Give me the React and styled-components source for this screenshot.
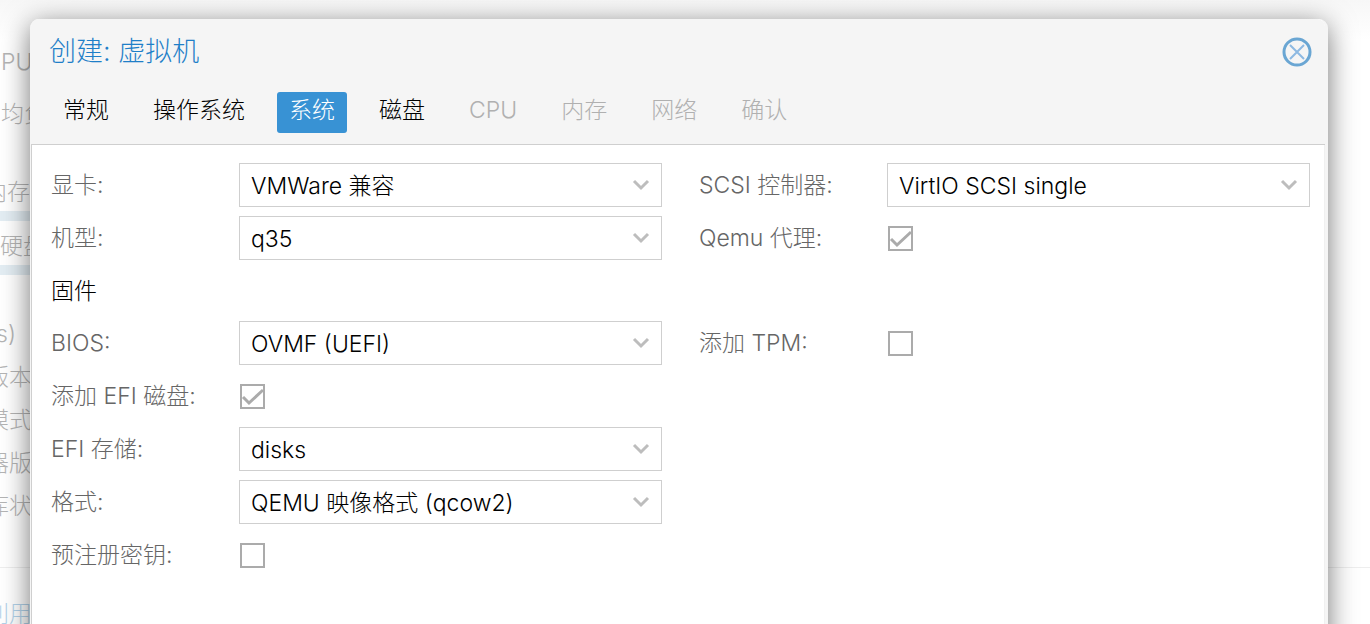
import React, { useState } from "react";
import styled, { createGlobalStyle, css } from "styled-components";

const GlobalStyle = createGlobalStyle`
  * {
    box-sizing: border-box;
  }

  body {
    margin: 0;
    background: #fff;
    overflow: hidden;
    font-family: Inter, "Noto Sans CJK SC", sans-serif;
    font-size: 23px;
    font-weight: 300;
  }

  button, select, input {
    font: inherit;
  }
`;

const tabs = [
  { label: "常规" },
  { label: "操作系统" },
  { label: "系统" },
  { label: "磁盘" },
  { label: "CPU", disabled: true },
  { label: "内存", disabled: true },
  { label: "网络", disabled: true },
  { label: "确认", disabled: true },
];

function SelectField({ id, label, value }) {
  return (
    <Field>
      <Label htmlFor={id}>{label}</Label>
      <SelectBox>
        <Select id={id} defaultValue={value}>
          <option value={value}>{value}</option>
        </Select>
        <Chevron viewBox="0 0 18 12" aria-hidden="true">
          <path d="M2 2l7 7 7-7" />
        </Chevron>
      </SelectBox>
    </Field>
  );
}

function CheckField({ id, label, checked }) {
  const [isChecked, setIsChecked] = useState(Boolean(checked));

  return (
    <Field>
      <Label htmlFor={id}>{label}</Label>
      <CheckBox>
        <Checkbox
          id={id}
          type="checkbox"
          checked={isChecked}
          onChange={(e) => setIsChecked(e.target.checked)}
        />
        {isChecked && (
          <Tick viewBox="0 0 25 25" aria-hidden="true">
            <path d="M3 13l6 6L23 6" />
          </Tick>
        )}
      </CheckBox>
    </Field>
  );
}

function App() {
  const [active, setActive] = useState("系统");

  return (
    <Page>
      <GlobalStyle />
      <Summary aria-hidden="true">
        <Group $top={36}>
          <Stat>PU</Stat>
          <Stat>均负</Stat>
        </Group>
        <Group $top={27}>
          <Usage $end>内存</Usage>
          <Usage>硬盘</Usage>
        </Group>
        <Group $top={38}>
          <Info $tail>s)</Info>
          <Info>版本</Info>
          <Info>模式</Info>
          <Info>器版</Info>
          <Info>库状</Info>
        </Group>
        <Chart>利用</Chart>
      </Summary>

      <Dialog role="dialog" aria-labelledby="title">
        <Header>
          <TitleBar>
            <Title id="title">创建: 虚拟机</Title>
            <Close type="button" aria-label="关闭">
              <svg viewBox="0 0 30 30" width="30" height="30">
                <circle cx="15" cy="15" r="13" stroke="#6aa6d3" strokeWidth="3" />
                <path d="M8 8l14 14M22 8L8 22" stroke="#8db9e2" strokeWidth="2" />
              </svg>
            </Close>
          </TitleBar>
          <Tabs>
            {tabs.map((tab) => (
              <Tab
                key={tab.label}
                type="button"
                disabled={tab.disabled}
                $active={tab.label === active}
                onClick={() => setActive(tab.label)}
              >
                {tab.label}
              </Tab>
            ))}
          </Tabs>
        </Header>

        <Form>
          <SelectField id="vga" label="显卡:" value="VMWare 兼容" />
          <SelectField id="scsi" label="SCSI 控制器:" value="VirtIO SCSI single" />
          <SelectField id="machine" label="机型:" value="q35" />
          <CheckField id="agent" label="Qemu 代理:" checked />
          <Section>固件</Section>
          <SelectField id="bios" label="BIOS:" value="OVMF (UEFI)" />
          <CheckField id="tpm" label="添加 TPM:" />
          <LeftColumn>
            <CheckField id="efi" label="添加 EFI 磁盘:" checked />
            <SelectField id="storage" label="EFI 存储:" value="disks" />
            <SelectField id="format" label="格式:" value="QEMU 映像格式 (qcow2)" />
            <CheckField id="keys" label="预注册密钥:" />
          </LeftColumn>
        </Form>
      </Dialog>
    </Page>
  );
}

const Page = styled.div`
  position: relative;
  display: flex;
  height: 100vh;
  overflow: hidden;
  background: linear-gradient(#f7f7f7, #fff 40px);
`;

/* the node summary that shows behind the window */
const Summary = styled.div`
  width: 100%;
  color: #b4b4b4;
  white-space: nowrap;
`;

const Group = styled.div`
  padding-top: ${(props) => props.$top}px;
`;

const Stat = styled.div`
  height: 52px;
  padding-left: 1px;
  line-height: 52px;
`;

const Usage = styled.div`
  display: flex;
  width: 30px;
  height: 54px;
  padding-top: 6px;
  border-bottom: 10px solid #e3edf3;
  line-height: 38px;
  justify-content: ${(props) => (props.$end ? "flex-end" : "flex-start")};
`;

const Info = styled.div`
  display: flex;
  justify-content: flex-end;
  width: ${(props) => (props.$tail ? 16 : 32)}px;
  height: 43px;
  line-height: 43px;
`;

const Chart = styled.div`
  display: flex;
  height: 92px;
  margin-top: 39px;
  border-top: 1px solid #eee;
  color: #b3d3ea;
  line-height: 92px;
  text-indent: -14px;
`;

const Dialog = styled.div`
  position: absolute;
  inset: 19px 42px -60px 30px;
  border: solid #f5f5f5;
  border-width: 0 3px 0 1px;
  border-radius: 9px;
  background: #fff;
  box-shadow: 0 6px 28px rgba(0, 0, 0, 0.55);
`;

const Header = styled.div`
  padding: 12px 13px 11px 18px;
  border-bottom: 1px solid #cfcfcf;
  border-radius: 8px 8px 0 0;
  background: #f5f5f5;
`;

const TitleBar = styled.div`
  display: flex;
  align-items: center;
  justify-content: space-between;
  height: 41px;
`;

const Title = styled.h1`
  margin: 0;
  color: #1f7fc8;
  font-size: 27px;
  font-weight: 300;
  line-height: 41px;
`;

const Close = styled.button`
  display: flex;
  padding: 0;
  border: 0;
  background: none;
  cursor: pointer;

  svg {
    fill: none;
  }
`;

const Tabs = styled.div`
  display: flex;
  gap: 20px;
  padding: 20px 0 0 2px;
`;

const Tab = styled.button`
  height: 41px;
  padding: 0 12px 4px;
  border: 0;
  border-radius: 3px;
  background: none;
  color: #000;
  line-height: 37px;
  white-space: nowrap;
  cursor: pointer;

  &:disabled {
    color: #b0b0b0;
    cursor: default;
  }

  ${(props) =>
    props.$active &&
    css`
      background: #3892d4;
      color: #fff;
    `}
`;

const Form = styled.form`
  display: grid;
  grid-template-columns: 1fr 1fr;
  gap: 9px 37px;
  height: 100%;
  align-content: start;
  padding: 18px 14px 18px 19px;
  border-left: 1px solid #cfcfcf;
  border-right: 1px solid #f0f0f0;
`;

const Field = styled.div`
  display: flex;
  height: 44px;
`;

const LeftColumn = styled.div`
  display: flex;
  flex-direction: column;
  gap: 9px;
  grid-column: 1;
`;

const Label = styled.label`
  flex: 0 0 188px;
  color: #666;
  line-height: 44px;
  white-space: nowrap;
`;

const Section = styled.h2`
  grid-column: 1 / -1;
  height: 43px;
  margin: 0;
  color: #000;
  font-size: 23px;
  font-weight: 300;
  line-height: 44px;
`;

const SelectBox = styled.div`
  position: relative;
  flex: 1;
`;

const Select = styled.select`
  width: 100%;
  height: 44px;
  padding: 2px 48px 0 11px;
  border: 1px solid #cfcfcf;
  border-radius: 0;
  appearance: none;
  background: #fff;
  color: #000;
  cursor: pointer;
`;

const Chevron = styled.svg`
  position: absolute;
  top: 16px;
  right: 12px;
  width: 18px;
  height: 12px;
  fill: none;
  stroke: #bdbdbd;
  stroke-width: 3;
  pointer-events: none;
`;

const CheckBox = styled.div`
  position: relative;
  width: 25px;
  height: 25px;
  margin: 10px 1px;
`;

const Checkbox = styled.input`
  display: block;
  width: 25px;
  height: 25px;
  margin: 0;
  border: 2px solid #ababab;
  appearance: none;
  background: #fff;
  cursor: pointer;
`;

const Tick = styled.svg`
  position: absolute;
  inset: 0;
  fill: none;
  stroke: #ababab;
  stroke-width: 3;
  pointer-events: none;
`;

export default App;
